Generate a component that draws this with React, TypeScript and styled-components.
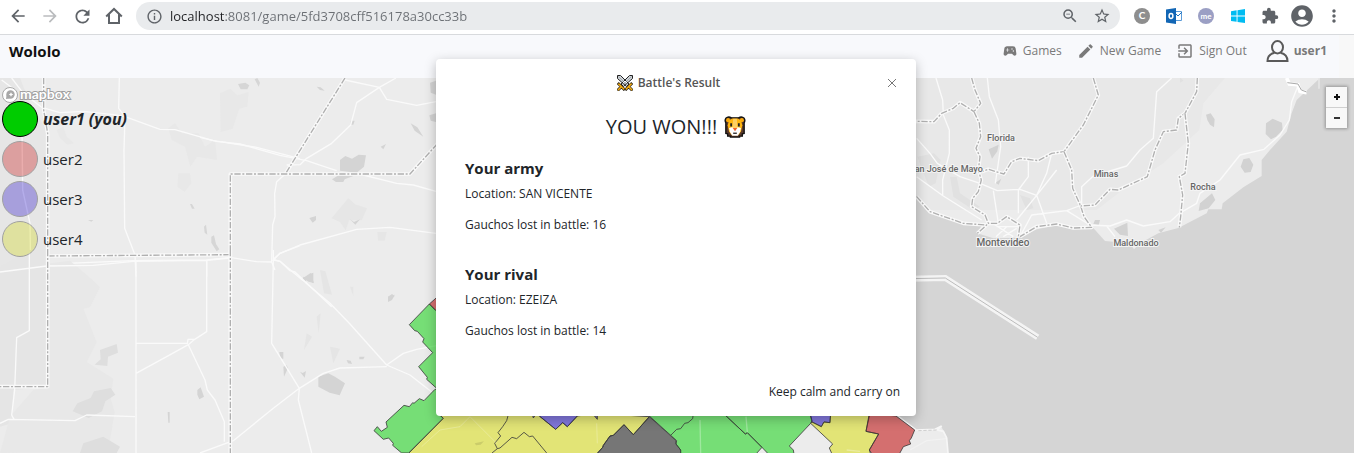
import React from "react";
import styled, { createGlobalStyle, css } from "styled-components";
import {
  MdArrowBack,
  MdArrowForward,
  MdRefresh,
  MdInfoOutline,
  MdZoomOut,
  MdStarBorder,
  MdExtension,
  MdAccountCircle,
  MdMoreVert,
  MdSportsEsports,
  MdEdit,
  MdExitToApp,
} from "react-icons/md";

const GlobalStyle = createGlobalStyle`
  * { box-sizing: border-box; }
  body {
    margin: 0;
    background: #f8f8f8;
    color: #212529;
    font-family: "Open Sans", "Noto Sans", sans-serif;
    font-size: 12px;
  }
  button { font: inherit; color: inherit; }
  svg { flex: none; }
`;

/* ---------- layout ---------- */

const Page = styled.div`
  display: flex;
  flex-direction: column;
  min-height: 100vh;
`;

const Game = styled.div`
  position: relative;
  display: flex;
  flex-direction: column;
  flex: 1;
`;

/* ---------- browser bar ---------- */

const BrowserBar = styled.header`
  display: flex;
  align-items: center;
  gap: 8px;
  height: 35px;
  padding: 0 8px 2px 6px;
  background: #fff;
  border-bottom: 1px solid #d8dadd;
  color: #5f6368;
`;

const BarButton = styled.button<{ $faded?: boolean }>`
  display: flex;
  align-items: center;
  justify-content: center;
  flex: none;
  width: 24px;
  height: 24px;
  padding: 0;
  border: 0;
  background: none;
  color: ${(p) => (p.$faded ? "#babcbe" : "#5f6368")};
`;

const Omnibox = styled.div`
  display: flex;
  align-items: center;
  gap: 8px;
  flex: 1;
  height: 28px;
  margin: 0 2px;
  padding: 0 6px;
  border-radius: 14px;
  background: #e9ebed;
`;

const Address = styled.input`
  flex: 1;
  min-width: 0;
  margin-left: -4px;
  padding: 0;
  border: 0;
  outline: 0;
  font: 13px "Open Sans", sans-serif;
  background: linear-gradient(90deg, #202124 55px, #6b6f74 55px);
  background-clip: text;
  -webkit-text-fill-color: transparent;
`;

/* ---------- site navigation ---------- */

const NavBar = styled.nav`
  display: flex;
  align-items: flex-start;
  justify-content: space-between;
  height: 43px;
  margin-right: 15px;
  padding: 4px 12px 0 9px;
  background: #f8f9fc;
`;

const Brand = styled.a`
  color: #111;
  font-size: 15px;
  font-weight: 700;
  line-height: 24px;
  text-decoration: none;
`;

const NavLinks = styled.div`
  display: flex;
  align-items: center;
  gap: 15px;
`;

const NavLink = styled.a<{ $user?: boolean }>`
  display: flex;
  align-items: center;
  gap: 5px;
  color: #7a7a7a;
  line-height: 24px;
  text-decoration: none;
  ${(p) =>
    p.$user &&
    css`
      margin-left: 4px;
      font-weight: 700;
    `}
`;

/* ---------- map ---------- */

const MapArea = styled.main`
  position: relative;
  flex: 1;
  min-height: 375px;
  overflow: hidden;
  background: #ececec;
`;

const MapDrawing = styled.svg`
  position: absolute;
  inset: 0;
  width: 100%;
  height: 100%;
`;

const CityLabel = styled.text<{ $large?: boolean }>`
  font-family: Roboto, sans-serif;
  font-size: ${(p) => (p.$large ? 10 : 9)}px;
  font-weight: 500;
  fill: #666;
  stroke: #f4f4f4;
  stroke-width: 2px;
  paint-order: stroke;
  text-anchor: middle;
`;

const MapLogo = styled.a`
  display: flex;
  position: absolute;
  top: 8px;
  left: 2px;
`;

const Legend = styled.ul`
  position: absolute;
  top: 21px;
  left: 2px;
  margin: 0;
  padding: 0;
  list-style: none;
`;

const Player = styled.li<{ $you?: boolean }>`
  display: flex;
  align-items: center;
  gap: 5px;
  height: 40px;
  font-size: 15px;
  ${(p) =>
    p.$you &&
    css`
      font-size: 16px;
      font-style: italic;
      font-weight: 700;
    `}
`;

const Swatch = styled.span<{ $color: string; $faded?: boolean }>`
  width: 36px;
  height: 36px;
  border: 1px solid #000;
  border-radius: 50%;
  background: ${(p) => p.$color};
  opacity: ${(p) => (p.$faded ? 0.3 : 1)};
`;

const ZoomControl = styled.div`
  position: absolute;
  top: 9px;
  right: 7px;
  display: flex;
  flex-direction: column;
  width: 21px;
  background: #f8f8f8;
  box-shadow: 0 0 3px 1px rgba(0, 0, 0, 0.3);
`;

const ZoomButton = styled.button`
  display: flex;
  align-items: center;
  justify-content: center;
  height: 20px;
  padding: 0;
  border: 0;
  background: none;
  & + & {
    height: 21px;
    border-top: 1px solid #d0d0d0;
  }
`;

/* ---------- dialog ---------- */

const DialogLayer = styled.div`
  position: absolute;
  inset: 0;
  display: flex;
  align-items: flex-start;
  justify-content: center;
  padding: 24px 2px 0 0;
`;

const Dialog = styled.section`
  width: 480px;
  padding: 12px 16px 14px 29px;
  border-radius: 4px;
  background: #fff;
  box-shadow: 0 3px 12px rgba(0, 0, 0, 0.25);
`;

const DialogHeader = styled.div`
  display: flex;
  align-items: center;
`;

const DialogTitle = styled.h2`
  display: flex;
  align-items: center;
  justify-content: center;
  gap: 5px;
  flex: 1;
  margin: 0 12px 0 0;
  color: #555;
  font-size: 12px;
  font-weight: 600;
  line-height: 24px;
`;

const CloseButton = styled.button`
  display: flex;
  align-items: center;
  justify-content: center;
  width: 16px;
  height: 16px;
  padding: 0;
  border: 0;
  background: none;
`;

const Outcome = styled.p`
  display: flex;
  align-items: center;
  justify-content: center;
  gap: 7px;
  margin: 18px 13px 15px 0;
  font-size: 20px;
  font-weight: 400;
  line-height: 28px;
`;

const ArmyTitle = styled.h3`
  margin: 0 0 4px;
  font-size: 15px;
  font-weight: 700;
  line-height: 24px;
`;

const ArmyLine = styled.p`
  margin: 0 0 11px;
  line-height: 20px;
`;

const Army = styled.div`
  & + & {
    margin-top: 27px;
  }
`;

const DialogFooter = styled.div`
  display: flex;
  justify-content: flex-end;
  padding-top: 30px;
`;

const FooterButton = styled.button`
  padding: 0;
  border: 0;
  background: none;
  line-height: 20px;
`;

/* ---------- icons ---------- */

const HomeIcon = () => (
  <svg width="18" height="18" viewBox="0 0 18 18" fill="none" stroke="#5f6368" strokeWidth="2">
    <path d="M1.2 9.4 9 2l7.800 7.400M4 7.500V16h10V7.500" />
  </svg>
);

const LetterBadge = ({ text, fill, r }: { text: string; fill: string; r: number }) => (
  <svg width="18" height="18" viewBox="0 0 18 18">
    <circle cx="9" cy="9" r={r} fill={fill} />
    <text x="9" y="12" textAnchor="middle" fontSize={text.length > 1 ? 8 : 10} fontWeight="700" fill="#fff" fontFamily="Lato, sans-serif">
      {text}
    </text>
  </svg>
);

const OutlookIcon = () => (
  <svg width="18" height="18" viewBox="0 0 18 18">
    <path d="M9 4.500h7.500v9H9z" fill="#fff" stroke="#5b9bd8" />
    <path d="m10 6 3 3 4-4" fill="none" stroke="#1e73c2" />
    <path d="M1 2.500 11 1v16L1 15.500z" fill="#1266b5" />
    <ellipse cx="6" cy="9" rx="1.900" ry="2.400" fill="none" stroke="#fff" strokeWidth="1.500" />
  </svg>
);

const WindowsIcon = () => (
  <svg width="16" height="16" viewBox="0 0 16 16" fill="#00bcf2">
    <path d="M1 3.200 6.600 2.300V7.600H1zM7.500 2.200 15 1v6.600H7.500zM1 8.500h5.600v5.300L1 13zM7.500 8.500H15V15l-7.500-1.100z" />
  </svg>
);

const UserIcon = () => (
  <svg width="23" height="23" viewBox="0 0 23 23" fill="none" stroke="#5a5a5a" strokeWidth="2">
    <ellipse cx="11.500" cy="7.300" rx="5.500" ry="6.200" />
    <path d="M8.500 12.700C4.500 13.700 1.500 16.500 1.500 21h20c0-4.500-3-7.300-7-8.300" />
  </svg>
);

const SwordsIcon = () => (
  <svg width="16" height="16" viewBox="0 0 16 16">
    <path d="M.5.500h3L12 9l-2.500 2.500L.5 3.500zM15.500.500h-3L4 9l2.500 2.500 9-8z" fill="#cfd4d8" stroke="#222" />
    <path d="M1.500 1.500l8 8M14.500 1.500l-8 8" stroke="#8e979d" strokeWidth="0.700" />
    <path d="M1.800 9l5 5M14.200 9l-5 5M1.500 14.500l2.500-2.500M14.500 14.500l-2.500-2.500" stroke="#2b2418" strokeWidth="3" strokeLinecap="square" />
    <path d="M2 9.200l4.600 4.600M14 9.200l-4.600 4.600M1.500 14.500l2.500-2.500M14.500 14.500l-2.500-2.500" stroke="#f5ac12" strokeWidth="1.600" strokeLinecap="square" />
  </svg>
);

const LionIcon = () => (
  <svg width="22" height="22" viewBox="0 0 24 24">
    <path
      d="M2 2.500C4 .5 6.500 1 8 2h8c1.500-1 4-1.500 6 .5 1 1.500.8 3.500 0 5V19l-2 .5V22h-3v1H7v-1H4v-2.500L2 19V7.500c-.8-1.500-1-3.500 0-5z"
      fill="#5b3a2b"
      stroke="#111"
      strokeWidth="1.500"
    />
    <circle cx="4.500" cy="4.500" r="2.200" fill="#f7a80d" />
    <circle cx="19.500" cy="4.500" r="2.200" fill="#f7a80d" />
    <path d="M5.500 4.500 9 2.800h6l3.500 1.700L20 10l-1.500 7-3 4h-7l-3-4L4 10z" fill="#ffb50f" />
    <path d="M5.500 13 9.500 12h5l4 1-1 4.500-2.500 4H9l-2.500-4z" fill="#fff" />
    <path d="M10 3h4l.8 10H9.200z" fill="#ffd063" />
    <path d="M6.800 8h2v3.500h-2zM15.200 8h2v3.500h-2z" fill="#222" />
    <path d="M9.500 13h5L12 16.500z" fill="#f2632a" />
    <path d="M10 18.800h4" stroke="#222" strokeWidth="1.400" />
  </svg>
);

/* ---------- map drawing ---------- */

/* Each sector is drawn on a grid three times finer than the map. */
const Sector = ({ x, y, children }: { x: number; y: number; children: React.ReactNode }) => (
  <g transform={`translate(${x} ${y}) scale(0.33333)`}>{children}</g>
);

const Roads = ({ d }: { d: string }) => (
  <path d={d} fill="none" stroke="#fafafa" strokeWidth="4" strokeLinejoin="round" />
);

const Border = ({ d }: { d: string }) => (
  <g fill="none" strokeLinejoin="round">
    <path d={d} stroke="#f9f9f9" strokeWidth="11" />
    <path d={d} stroke="#b0b0b0" strokeWidth="4" strokeDasharray="19 5 6 5" />
  </g>
);

const Region = ({ d, fill }: { d: string; fill: string }) => (
  <path d={d} fill={fill} stroke="#3c3c3c" strokeWidth="2.500" strokeLinejoin="round" />
);

const GREEN = "rgba(0, 208, 0, 0.5)";
const RED = "rgba(190, 0, 0, 0.53)";
const YELLOW = "rgba(216, 220, 0, 0.5)";
const PURPLE = "rgba(20, 0, 200, 0.5)";
const GREY = "rgba(0, 0, 0, 0.5)";

const TerritoryMap = () => (
  <MapDrawing viewBox="0 78 1354 375" preserveAspectRatio="xMinYMin slice" role="img" aria-label="Territories">
    <Sector x={910} y={70}>
      <path d="M-300 0H950L945 24 880 100 868 180 830 215 760 280 650 350 560 420 -300 420z" fill="#e8e8e8" />
      <path
        d="M-60 330 20 378 60 425 160 460 215 465 202 490 250 505 330 503 380 478 440 466 490 476 550 474 585 513 660 520 672 538 690 520 745 490 805 474 890 430 895 418 935 418 938 400 1000 352 1055 318 1055 270 1080 240 1130 185 1145 130 1160 90 1230 24 1400 0V1200H116L114 1149 110 1100 94 1070 80 1080 15 1080-42 1036-140 960-600 900z"
        fill="#d5d5d5"
      />
      <path d="M1068 160l20-14 28 12 2 22-20 20-15 8-16-16zM1000 268l18-4 12 20-8 22-18 2-12-18zM888 134l14-4 12 18-2 24-12-8-8-14zM870 400l36-30 10 20-20 25-30 8zM236 238l30-14-4 20-16 22zM256 338l18-12-8 18zM612 476l40-18 2 40-24-4zM745 480l22-8-14 16zM555 450h15l-4 16-16-4z" fill="#d2d2d2" />
      <path d="M22 260l50-10 20 20-15 70-20 10-20-50zM120 320l20 0 10 50 60 40-20 10-60-40zM330 375l30 10 10 30-20 5zM810 22l10 10-10 6z" fill="#e1e1e1" />
      <Roads d="M78 24 98 90 100 135 118 180 118 250 98 330 98 375M232 24 238 80 265 150 272 230 262 300 256 340M20 205 60 250 82 280 150 320 210 340 262 362 330 358 380 376 440 300M20 320 100 378 215 450M250 362 265 460M262 362 330 358M355 260 355 320 325 360 325 430M425 250 410 310 380 376 410 460M380 376 320 450M330 500 365 435 470 422 515 405 515 350 550 318 650 288 690 240 730 205 740 65 785 24M470 422 540 465 600 468 650 450 700 468 780 455 808 430 860 400 870 370 930 330 990 255 1062 238 1110 195 1138 150 1145 95 1165 45M590 468 615 500M232 450 310 500M260 470 330 470M258 500 290 470M280 500 320 475" />
      <Border d="M185 24 195 60 212 100 192 125 150 98 130 115 95 130 72 155 18 154" />
      <Border d="M192 125 208 160 212 200 198 235 210 260 205 300 214 330 205 365 188 385 185 410 225 435 235 460 262 460 290 440 330 465 325 500" />
      <Border d="M550 24 565 75 545 115 520 165 462 245 425 250 385 272 330 265 305 275 282 312 235 298 215 305" />
      <Border d="M462 245 485 300 488 355 512 408 522 440 545 472 490 474 440 462 380 470 330 500" />
      <Border d="M862 24 860 65 825 130 805 145 800 180 760 185 735 240 712 320 625 360 600 358 555 405 512 408" />
      <Border d="M825 130 835 220 825 310 808 320 818 375 812 440 808 472" />
      <Border d="M20 380 60 425 160 460 230 465 202 490" />
      <path d="M1130 24 1138 42 1164 44 1170 64 1190 68" fill="none" stroke="#fff" strokeWidth="11" />
      <path d="M1132 38 1164 42 1174 60 1190 66" fill="none" stroke="#aaa" strokeWidth="3" />
      <path d="M1227 22v34" stroke="#e6e6e6" strokeWidth="5" />
      <path d="M0 626 106 624 383 802" fill="none" stroke="#f4f4f4" strokeWidth="18" />
      <path d="M0 626 106 624 383 802" fill="none" stroke="#bcbcbc" strokeWidth="3" />
    </Sector>

    <Sector x={0} y={70}>
      <path d="M0 24H60L90 100 140 180 140 560 0 590z" fill="#e6e6e6" />
      <path d="M660 70l30-14 22 20 34-10-4 44-24 6-20 60-36 10zM505 175l20-15 20 30 50 0 20 40 30-20 6 60-60-10-20 30-16-60-40-20zM535 310h35l4 30-20 25-22-15zM170 180l20-10 10 30 22 20-20 4-22-20z" fill="#e8e8e8" />
      <path d="M714 42l22-4 12 8-6 12-20 0zM764 28l8-4 8 14-4 12zM570 402l6 0 8 14-8 0zM612 470l6-6 4 30-8-6zM634 500l8-4 6 26 10 16-8 6-16-26zM264 450h16l-6 5z" fill="#d6d6d6" />
      <Roads d="M5 30 45 60 30 80M35 24 70 70 125 112 180 128 250 124 340 134 375 140 480 178 525 179 640 212 770 232 900 266M358 24 356 115 375 140 372 240 374 475 405 555 408 620M66 180 68 360 90 460 92 590M825 600 815 576 818 465 825 440 824 370 830 335 860 308M818 572 840 550 900 527M0 600 200 580 400 572 620 570 690 562 770 575 815 576M620 570V620" />
      <Border d="M131 24V120L143 190V620" />
    </Sector>

    <Sector x={200} y={70}>
      <path d="M395 445l50-60 20 18 36 12-16 36-38 0-10 30-16-24zM532 486l28 0-6 26-20 0z" fill="#e6e6e6" />
      <path d="M420 270l16-12 20 8 20-12 22 2-6 34-22 18-50-6zM396 328l20-12 44 2-26 10-4 8-22 0zM350 50l12 2 12 10-14-2zM690 38l18-6v42l-16-6zM688 136l20-6v26l-16-4zM632 160l20 12 18 28-26-18zM452 152l12 0-4 12-8 0zM542 230l16-8-8 16zM328 444l20-6 0 12-10 8zM450 448l12 8 18-8-14 16zM310 620l10 4-4 16-8-6zM328 612l12-4 0 32-10-6zM564 680l20-6-8 16-12 6z" fill="#d4d4d4" />
      <Roads d="M435 30 538 52 560 88 650 106 708 95M588 24 538 52 470 98 452 165 395 220 320 265 300 284 260 285M0 202 50 214 120 222 240 256 320 272 380 292 410 302M490 315 590 340 640 345 708 364M220 568 240 550 300 525 470 478 570 472 708 490M220 568 240 574 270 602 285 606 395 710" />
      <Border d="M435 24 256 312" />
      <Border d="M91 720V312H630L708 226 800 130" />
      <Border d="M-455 558 91 554" />
    </Sector>

    <Sector x={0} y={250}>
      <path d="M0 50 90 0 140 0 145 410 40 420 35 520 0 530z" fill="#e5e5e5" />
      <path d="M150 40l60-8 70 60 20 20-30 60-20 4 40 100-30 60 80 50-8 60 12 40-20 122H60L0 609 30 500 100 420 145 410z" fill="#e8e8e8" />
      <path d="M300 300l50-18 4 26-30 12-2 28-38-4 18-16zM232 460l40-16 10-20 50-10 14 20-30 20-10 30-40 20-48-20zM250 580l60-20 50 30-10 19H240z" fill="#dedede" />
      <path d="M955 380l30-10 20 10 30 20-16 36-30-8-34-18zM592 420l10-8 10 28-14 8-6-14zM503 486l6 0 0 32-4 0zM838 306h12v20h-10zM850 350l10-4 4 8-12 26zM900 365l8 4 10-6-4 20zM1164 140l12-8 8 6-16 16zM908 85l24-16 10 30-16-4zM1040 330l12 2 4 10-12-2zM1078 320l16 0-4 8-12 0z" fill="#d4d4d4" />
      <path d="M960 60l16 4 20 70-24-4zM920 250l16 10-24 40zM950 200l12-10-6 60zM990 290l30 6-20 44zM1050 110l10 0 0 28z" fill="#e5e5e5" />
      <Roads d="M0 66 140 48 280 46 400 34 620 31 690 24M88 10V242L50 263 44 420 35 495 42 508M0 520 25 508 225 512 260 495 405 500M408 30V609M408 280H562L564 268H584L565 284 500 320 408 370M565 284 615 390 622 420 645 450 673 515V575M620 31V245L584 268M820 0V30L815 280 898 415 895 450 935 609M820 30 840 34 990 160 1050 222 1160 345 1230 375 1300 430M1160 345 1210 310 1250 298 1320 285M600 609 700 572 820 475 898 415 970 370 1020 354 1160 350" />
      <Border d="M143 0V410H0" />
      <Border d="M691 0V620" />
    </Sector>

    <Sector x={350} y={290}>
      <Region d="M238 42 320-30V62H258z" fill={RED} />
      <Region d="M238 42 178 104 194 122 202 124 222 146 218 156 248 188 206 230 232 262 230 268 258 293H400V62H258z" fill={GREEN} />
      <Region d="M255 298 222 332 208 326 192 340 188 338 178 350 162 346 108 396 112 412 94 424 82 410 72 422 100 448 116 444 130 460 128 466 155 489H176L280 385 262 368 300 298z" fill={GREEN} />
      <Region d="M174 492 280 385 262 368 570 360 568 378 617 418 638 398 652 410 682 378 740 370 898 380 850 434 822 404 790 436 780 438 760 466 758 472 740 492z" fill={YELLOW} />
      <Region d="M568 378 617 418 638 398 652 410 682 378 660 340zM546 370 550 384 560 370zM730 374 742 388V370z" fill={PURPLE} />
      <Region d="M898 380 978 452 978 462 992 480V492H740L758 472 760 466 780 438 790 436 822 404 850 434z" fill={GREY} />
      <path d="M476 370 470 392 458 410 444 428 452 438 434 460 442 476 426 489M442 476 450 474 486 442 500 446 522 427 538 440 548 438 590 489" fill="none" stroke="#3c3c3c" strokeWidth="2.500" />
      <path d="M215 470 270 420 330 410 360 380 440 460M740 400 742 460" fill="none" stroke="#fff" strokeOpacity="0.25" strokeWidth="3" />
      <path d="M374 460l28-6-10 10-14 2z" fill="#000" opacity="0.1" />
    </Sector>

    <Sector x={660} y={370}>
      <Region d="M-32 138 50 212 48 222 62 240V252H288L306 232 262 188 256 192 190 130-20 120z" fill={GREEN} />
      <Region d="M190 130 256 192 262 188 306 232 325 252H402L400 240 388 228 452 160 456 152 450 130z" fill={GREEN} />
      <Region d="M450 130 456 156 484 170 492 156 510 158 512 130z" fill={PURPLE} />
      <Region d="M456 156 484 170 492 156 510 158 512 130H628V138L618 184 656 192 628 240 632 252H516L508 234 518 222 452 160z" fill={YELLOW} />
      <path d="M708 134 768 180 825 178 845 168 832 180 850 184 860 204 864 249" fill="none" stroke="#f6f6f6" strokeWidth="5" />
      <Region d="M628 130 618 184 656 192 628 240 636 252H718L730 230 752 222 748 212 754 204 764 180 708 138z" fill={RED} />
      <path d="M32 196 50 178 62 176 74 160 84 158 98 146 100 130" fill="none" stroke="#3c3c3c" strokeWidth="2.500" />
      <path d="M775 182 830 180" fill="none" stroke="#bbb" strokeWidth="2" strokeDasharray="10 5" />
      <path d="M750 240 800 212 860 206M120 150 122 249M258 140 262 188M560 240 600 244" fill="none" stroke="#fff" strokeOpacity="0.3" strokeWidth="4" />
    </Sector>

    <CityLabel x="1001" y="141">Florida</CityLabel>
    <CityLabel x="946" y="172">San José de Mayo</CityLabel>
    <CityLabel x="1106" y="177">Minas</CityLabel>
    <CityLabel x="1203" y="190">Rocha</CityLabel>
    <CityLabel x="1003" y="246" $large>Montevideo</CityLabel>
    <CityLabel x="1136" y="246">Maldonado</CityLabel>
  </MapDrawing>
);

const MapboxLogo = () => (
  <svg width="72" height="18" viewBox="0 0 72 18">
    <circle cx="8" cy="9" r="7.500" fill="#fff" stroke="#a8a8a8" />
    <circle cx="8.500" cy="8.500" r="4.200" fill="#a8a8a8" />
    <path d="M4 13l.6-4 3 3.400z" fill="#a8a8a8" />
    <path d="M9 6.200l.8 1.500 1.500.8-1.500.8L9 10.800l-.8-1.500-1.500-.8 1.500-.8z" fill="#fff" />
    <text x="18" y="13" fontFamily="Lato, sans-serif" fontSize="14" fontWeight="700" fill="#fff" stroke="#a0a0a0" strokeWidth="2" paintOrder="stroke">
      mapbox
    </text>
  </svg>
);

/* ---------- data ---------- */

const players = [
  { name: "user1 (you)", color: "#00cc00", you: true },
  { name: "user2", color: "#c80000" },
  { name: "user3", color: "#1800c8" },
  { name: "user4", color: "#d2d800" },
];

const armies = [
  { title: "Your army", location: "SAN VICENTE", lost: 16 },
  { title: "Your rival", location: "EZEIZA", lost: 14 },
];

export default function App() {
  return (
    <Page>
      <GlobalStyle />
      <BrowserBar>
        <BarButton aria-label="Back"><MdArrowBack size={20} /></BarButton>
        <BarButton aria-label="Forward" $faded><MdArrowForward size={20} /></BarButton>
        <BarButton aria-label="Reload"><MdRefresh size={21} /></BarButton>
        <BarButton aria-label="Home"><HomeIcon /></BarButton>
        <Omnibox>
          <BarButton aria-label="Site information"><MdInfoOutline size={17} /></BarButton>
          <Address aria-label="Address" defaultValue="localhost:8081/game/5fd3708cff516178a30cc33b" />
          <BarButton aria-label="Zoom"><MdZoomOut size={18} /></BarButton>
          <BarButton aria-label="Bookmark"><MdStarBorder size={18} /></BarButton>
        </Omnibox>
        <BarButton aria-label="Extension C"><LetterBadge text="C" fill="#8e8e8e" r={8} /></BarButton>
        <BarButton aria-label="Outlook"><OutlookIcon /></BarButton>
        <BarButton aria-label="Extension me"><LetterBadge text="me" fill="#9b9fc4" r={8} /></BarButton>
        <BarButton aria-label="Windows"><WindowsIcon /></BarButton>
        <BarButton aria-label="Extensions"><MdExtension size={18} /></BarButton>
        <BarButton aria-label="Profile"><MdAccountCircle size={26} /></BarButton>
        <BarButton aria-label="Menu"><MdMoreVert size={20} /></BarButton>
      </BrowserBar>

      <Game>
        <NavBar>
          <Brand href="#">Wololo</Brand>
          <NavLinks>
            <NavLink href="#"><MdSportsEsports size={16} />Games</NavLink>
            <NavLink href="#"><MdEdit size={18} />New Game</NavLink>
            <NavLink href="#"><MdExitToApp size={18} />Sign Out</NavLink>
            <NavLink href="#" $user><UserIcon />user1</NavLink>
          </NavLinks>
        </NavBar>

        <MapArea>
          <TerritoryMap />
          <MapLogo href="#" aria-label="Mapbox"><MapboxLogo /></MapLogo>
          <Legend>
            {players.map((p) => (
              <Player key={p.name} $you={p.you}>
                <Swatch $color={p.color} $faded={!p.you} />
                {p.name}
              </Player>
            ))}
          </Legend>
          <ZoomControl>
            <ZoomButton aria-label="Zoom in">
              <svg width="8" height="8" viewBox="0 0 8 8"><path d="M3 1h2v2h2v2H5v2H3V5H1V3h2z" fill="#111" /></svg>
            </ZoomButton>
            <ZoomButton aria-label="Zoom out">
              <svg width="8" height="8" viewBox="0 0 8 8"><path d="M1 3h6v2H1z" fill="#333" /></svg>
            </ZoomButton>
          </ZoomControl>
        </MapArea>

        <DialogLayer>
          <Dialog role="dialog" aria-labelledby="result-title">
            <DialogHeader>
              <DialogTitle id="result-title"><SwordsIcon />Battle's Result</DialogTitle>
              <CloseButton aria-label="Close">
                <svg width="10" height="10" viewBox="0 0 10 10"><path d="M1 1l8 8M9 1l-8 8" stroke="#777" /></svg>
              </CloseButton>
            </DialogHeader>
            <Outcome>YOU WON!!! <LionIcon /></Outcome>
            {armies.map((a) => (
              <Army key={a.title}>
                <ArmyTitle>{a.title}</ArmyTitle>
                <ArmyLine>Location: {a.location}</ArmyLine>
                <ArmyLine>Gauchos lost in battle: {a.lost}</ArmyLine>
              </Army>
            ))}
            <DialogFooter>
              <FooterButton>Keep calm and carry on</FooterButton>
            </DialogFooter>
          </Dialog>
        </DialogLayer>
      </Game>
    </Page>
  );
}
